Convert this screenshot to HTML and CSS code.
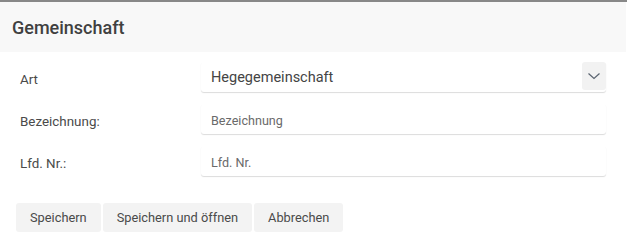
FILE: index.html
```html
<!DOCTYPE html>
<html lang="de">
<head>
<meta charset="utf-8">
<link rel="stylesheet" href="styles.css">
</head>
<body>
<div class="dialog">
  <div class="header"><h1 class="title">Gemeinschaft</h1></div>
  <form class="form">
    <div class="row">
      <label class="label">Art</label>
      <div class="field select">
        <span class="value">Hegegemeinschaft</span>
        <span class="arrow"><svg width="14" height="8" viewBox="0 0 14 8"><path d="M1.5 1.5 L7 6.5 L12.5 1.5" fill="none" stroke="#5a6470" stroke-width="1.2"/></svg></span>
      </div>
    </div>
    <div class="row">
      <label class="label">Bezeichnung:</label>
      <div class="field"><span class="placeholder">Bezeichnung</span></div>
    </div>
    <div class="row">
      <label class="label">Lfd. Nr.:</label>
      <div class="field"><span class="placeholder">Lfd. Nr.</span></div>
    </div>
  </form>
  <div class="actions">
    <button class="btn" type="button">Speichern</button>
    <button class="btn" type="button">Speichern und öffnen</button>
    <button class="btn" type="button">Abbrechen</button>
  </div>
</div>
</body>
</html>
```
FILE: styles.css
```css
* { box-sizing: border-box; }
html, body { margin: 0; padding: 0; background: #fff; }
body { font-family: Roboto, "Liberation Sans", sans-serif; color: #444; }
.dialog { width: 627px; border-top: 2px solid #888; }
.header { width: 626px; height: 50px; background: #f8f8f8; display: flex; align-items: center; padding: 1px 0 0 12px; }
.title { margin: 0; font-size: 18px; font-weight: 500; color: #404040; }
.form { padding: 10px 21px 0 20px; display: flex; flex-direction: column; gap: 12px; }
.row { display: flex; align-items: flex-start; height: 30px; }
.label { width: 181px; font-size: 13.4px; line-height: 16px; padding-top: 10px; color: #4a4a4a; }
.field { flex: 1; height: 30px; display: flex; align-items: center; padding: 3px 0 0 10px; border-radius: 3px; box-shadow: 0 1px 1px rgba(0,0,0,0.14); }
.select { justify-content: space-between; padding-top: 0; }
.value { font-size: 14.5px; color: #444; }
.placeholder { font-size: 12.6px; color: #6a6a6a; }
.arrow { width: 24px; height: 28px; background: #f2f2f2; border-radius: 3px; display: flex; align-items: center; justify-content: center; align-self: flex-start; }
.actions { display: flex; gap: 2px; padding: 27px 0 0 16px; }
.btn { font-family: inherit; font-size: 12.8px; color: #4a4a4a; background: #f3f3f3; border: none; border-radius: 3px; height: 29px; padding: 0 14px; }
```
